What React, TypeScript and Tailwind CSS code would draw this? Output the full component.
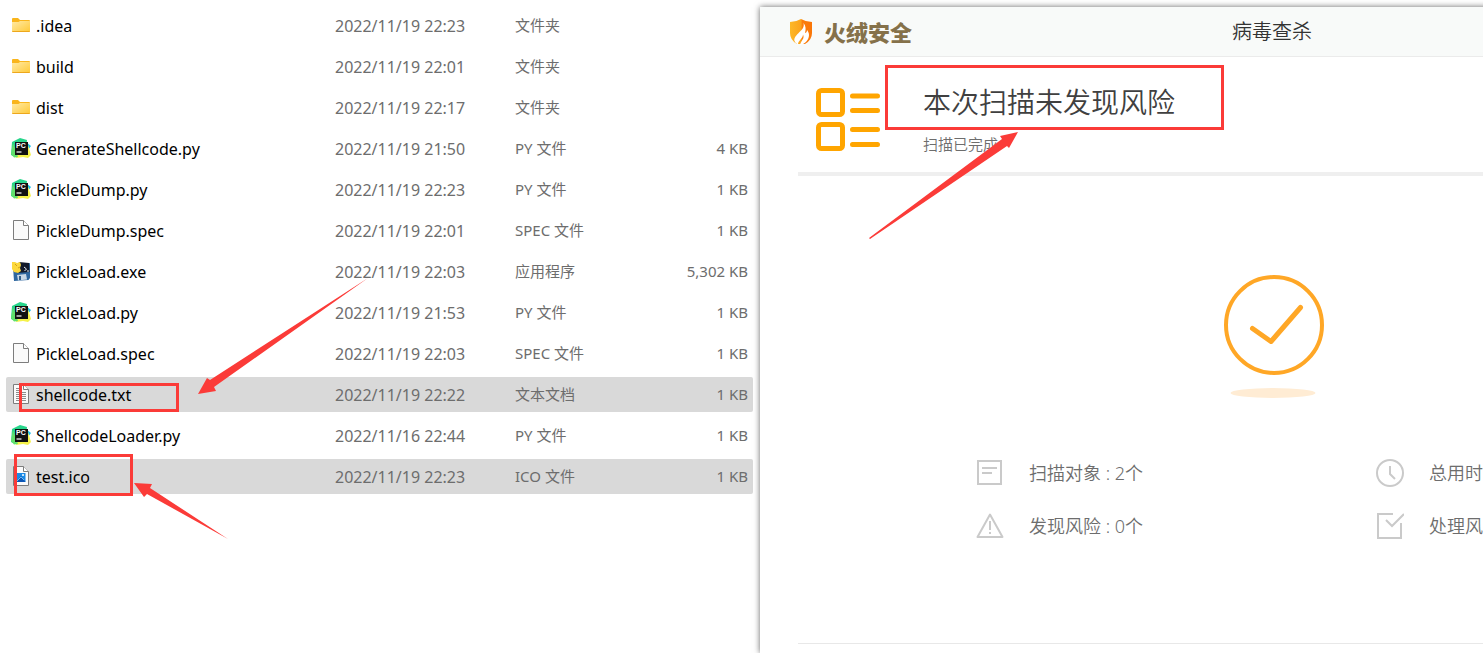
import type { ReactNode } from "react";
import clsx from "clsx";

type FileKind = "folder" | "python" | "blank" | "exe" | "text" | "image";

type FileEntry = {
  name: string;
  modified: string;
  type: string;
  size?: string;
  kind: FileKind;
  selected?: boolean;
};

const files: FileEntry[] = [
  { name: ".idea", modified: "2022/11/19 22:23", type: "文件夹", kind: "folder" },
  { name: "build", modified: "2022/11/19 22:01", type: "文件夹", kind: "folder" },
  { name: "dist", modified: "2022/11/19 22:17", type: "文件夹", kind: "folder" },
  { name: "GenerateShellcode.py", modified: "2022/11/19 21:50", type: "PY 文件", size: "4 KB", kind: "python" },
  { name: "PickleDump.py", modified: "2022/11/19 22:23", type: "PY 文件", size: "1 KB", kind: "python" },
  { name: "PickleDump.spec", modified: "2022/11/19 22:01", type: "SPEC 文件", size: "1 KB", kind: "blank" },
  { name: "PickleLoad.exe", modified: "2022/11/19 22:03", type: "应用程序", size: "5,302 KB", kind: "exe" },
  { name: "PickleLoad.py", modified: "2022/11/19 21:53", type: "PY 文件", size: "1 KB", kind: "python" },
  { name: "PickleLoad.spec", modified: "2022/11/19 22:03", type: "SPEC 文件", size: "1 KB", kind: "blank" },
  { name: "shellcode.txt", modified: "2022/11/19 22:22", type: "文本文档", size: "1 KB", kind: "text", selected: true },
  { name: "ShellcodeLoader.py", modified: "2022/11/16 22:44", type: "PY 文件", size: "1 KB", kind: "python" },
  { name: "test.ico", modified: "2022/11/19 22:23", type: "ICO 文件", size: "1 KB", kind: "image", selected: true },
];

function Page({ children }: { children?: ReactNode }) {
  return (
    <>
      <path d="M2.5 .5h10l5 5v14h-15z" fill="#fafafa" stroke="#7d7d7d" />
      <path d="M12.5 .5v5h5" fill="#fff" stroke="#7d7d7d" />
      {children}
    </>
  );
}

function FileIcon({ kind }: { kind: FileKind }) {
  return (
    <svg viewBox="0 0 20 20" className="mb-px h-5 w-5 shrink-0" aria-hidden="true">
      {kind === "folder" && (
        <>
          <defs>
            <linearGradient id="folder" x1="0" y1="0" x2="1" y2="1">
              <stop offset="0" stopColor="#ffeaa6" />
              <stop offset="1" stopColor="#ffc937" />
            </linearGradient>
          </defs>
          <path d="M1 4q0-1 1-1h5l2 2h9q1 0 1 1v3H1z" fill="#f9b51c" />
          <path d="M1 7h6.5l1.5-1h10v10q0 1-1 1H2q-1 0-1-1z" fill="url(#folder)" />
          <path d="M1.300 16.500h17.400" stroke="#eda71c" />
        </>
      )}
      {kind === "python" && (
        <>
          <path d="M1 4 9 0l7 2-2 16H2L0 17z" fill="#27d58b" />
          <path d="m15 4 5 4-3 4z" fill="#12bdea" />
          <path d="m14 6 3 1 3 10-3 3-5-1-7 1 1-6z" fill="#f5f24a" />
          <path d="m0 16 2-11 5 14-4 .5z" fill="#62e06c" />
          <path d="M4 4h13v13H4z" fill="#111" />
          <text x="5" y="10" fontSize="7" fontWeight="700" fontFamily="Liberation Sans, sans-serif" fill="#fff">
            PC
          </text>
          <path d="M5.500 14h5" stroke="#fff" strokeWidth="1.200" />
        </>
      )}
      {kind === "blank" && <Page />}
      {kind === "exe" && (
        <>
          <path d="m2 6 17-4v15l-1.500 2L3 20z" fill="#2f679f" />
          <path d="m8 1 10 1 .5 9-13 1z" fill="#121a2b" />
          <path d="m6 14 9-1 1 5.500-9 1z" fill="#c8d7e5" />
          <path d="M8 15h2v4H8z" fill="#315f8d" />
          <path d="m13 6 2.500 2-2 2M16 10h2" fill="none" stroke="#e9eef5" />
          <path d="M1 1h3l2 1 3-1 1 3-1 3 1 3-3 2-4-1-2-3z" fill="#fcd83c" />
          <path d="m4 3 2 2M7 7l2-1" stroke="#c79110" strokeWidth=".8" />
        </>
      )}
      {kind === "text" && (
        <Page>
          <path d="M5 4.500h6M5 6.500h6M5 8.500h10M5 10.500h10M5 12.500h10M5 14.500h10M5 16.500h10" stroke="#8d8d8d" />
        </Page>
      )}
      {kind === "image" && (
        <Page>
          <path d="M5 7h9.500v9H5z" fill="#1b8ae5" />
          <path d="m5 16 5-6 4.500 6z" fill="#0b55b5" />
          <path d="m5 16 5-5 3 3" fill="none" stroke="#8cd0ff" strokeWidth=".8" />
          <circle cx="12" cy="9" r="1" fill="#fff" />
        </Page>
      )}
    </svg>
  );
}

function FileList() {
  return (
    <section className="w-[760px] shrink-0 pt-[2px] pr-[7px] pl-[6px]">
      <table className="w-full table-fixed border-separate border-spacing-x-0 border-spacing-y-[6px] leading-5 text-[#6d6d6d]">
        <colgroup>
          <col />
          <col className="w-[180px]" />
          <col className="w-[130px]" />
          <col className="w-[108px]" />
        </colgroup>
        <tbody>
          {files.map((file) => (
            <tr key={file.name} className={clsx("h-[35px]", file.selected && "bg-[#d9d9d9]")}>
              <td className="rounded-l-xs pl-[5px]">
                <div className="flex items-center gap-[5px] text-base leading-5 text-black">
                  <FileIcon kind={file.kind} />
                  {file.name}
                </div>
              </td>
              <td className="text-base leading-5">{file.modified}</td>
              <td className="pb-[2px] text-[15px]">{file.type}</td>
              <td className="rounded-r-xs pr-[5px] pb-[2px] text-right text-[15px]">{file.size}</td>
            </tr>
          ))}
        </tbody>
      </table>
    </section>
  );
}

function ShieldLogo() {
  return (
    <svg viewBox="0 0 24 26" className="h-[26px] w-6" aria-hidden="true">
      <defs>
        <linearGradient id="shield" x1="0" y1="0" x2="1" y2="0">
          <stop offset="0" stopColor="#fdb827" />
          <stop offset=".5" stopColor="#fba31c" />
          <stop offset=".55" stopColor="#fb7d0c" />
          <stop offset="1" stopColor="#fa7608" />
        </linearGradient>
      </defs>
      <path d="M1 3q6 0 11-3 5 3 11 3v11q0 7-7 11H8q-7-4-7-11z" fill="url(#shield)" />
      <path
        d="M14.500 4c1 4-1 6-4 9s-6 6-5 9q1 3 3.500 3.500c0-4 5-6 5-10 2 4-2 6-3 10.500 5-1 9-5 9-10 0-2-1-4-2-5 0 2-1 3-2 3 1-4 1-7-1.500-10z"
        fill="#fff"
      />
    </svg>
  );
}

function ListIcon() {
  return (
    <svg viewBox="0 0 64 64" className="h-16 w-16" fill="none" stroke="#ffa500" strokeWidth="5" aria-hidden="true">
      <rect x="2.500" y="2.500" width="24" height="24" rx="3" />
      <rect x="2.500" y="36.500" width="24" height="24" rx="3" />
      <path d="M36.500 8h25M36.500 22.500h25M36.500 41.500h25M36.500 56.500h25" strokeLinecap="round" />
    </svg>
  );
}

function Stat({ icon, children }: { icon: ReactNode; children: ReactNode }) {
  return (
    <li className="flex h-[53px] items-center gap-[25px]">
      <svg viewBox="0 0 28 28" className="h-7 w-7 shrink-0" fill="none" stroke="#cacaca" strokeWidth="2" aria-hidden="true">
        {icon}
      </svg>
      {children}
    </li>
  );
}

function ScanWindow() {
  return (
    <main className="relative mt-[7px] min-w-[1024px] flex-1 bg-white shadow-[0_0_6px_rgba(0,0,0,0.6)]">
      <header className="grid h-[50px] grid-cols-[1fr_auto_1fr] items-center border-b border-[#ebebeb] bg-[#f8faf9] px-[29px]">
        <div className="flex items-center gap-[11px] text-[22px] leading-6 font-black text-[#85714a]">
          <ShieldLogo />
          火绒安全
        </div>
        <h1 className="text-xl font-[350] text-[#333]">病毒查杀</h1>
      </header>

      <div className="px-[38px]">
        <section className="flex h-[119px] items-center gap-[43px] border-b-4 border-[#efefef] pt-[10px] pl-[18px]">
          <ListIcon />
          <div className="flex flex-col gap-3 pb-1">
            <h2 className="text-[28px] leading-10 font-[350] text-[#404040]">本次扫描未发现风险</h2>
            <p className="text-[15px] leading-5 font-[350] text-[#6d6d6d]">扫描已完成</p>
          </div>
        </section>

        <section className="flex h-[468px] flex-col items-center border-b border-[#e8e8e8] pt-[99px]">
          <svg viewBox="0 0 100 123" className="ml-1 h-[123px] w-[100px]" fill="none" aria-hidden="true">
            <circle cx="50" cy="50" r="48" stroke="#ffa726" strokeWidth="4" />
            <path d="m28.500 53.500 18.500 13 29.500-34" stroke="#ffa726" strokeWidth="5" strokeLinecap="round" strokeLinejoin="round" />
            <ellipse cx="49" cy="118" rx="42.500" ry="5" fill="#ffecd4" />
          </svg>
          <ul className="mt-12 grid w-full grid-cols-[400px_1fr] pl-[178px] text-lg font-[350] text-[#6d6d6d]">
            <Stat
              icon={
                <>
                  <path d="M2 2h23v23H2z" />
                  <path d="M6 9h15M6 14h10" />
                </>
              }
            >
              扫描对象 : 2个
            </Stat>
            <Stat
              icon={
                <>
                  <circle cx="14" cy="14" r="13" />
                  <path d="M14 7v8l5 5" />
                </>
              }
            >
              总用时
            </Stat>
            <Stat
              icon={
                <>
                  <path d="M14 2.500 26.500 25h-25z" strokeLinejoin="round" />
                  <path d="M14 9v9M14 20v2" />
                </>
              }
            >
              发现风险 : 0个
            </Stat>
            <Stat
              icon={
                <>
                  <path d="M17 2H2v24h23V11" />
                  <path d="m10 8 6 6L28 2" />
                </>
              }
            >
              处理风
            </Stat>
          </ul>
        </section>
      </div>
    </main>
  );
}

// Red callouts drawn over both windows
function Callouts() {
  return (
    <div className="pointer-events-none absolute inset-0">
      <div className="absolute top-[383px] left-[19px] h-[29px] w-[160px] border-3 border-[#fb3b38]" />
      <div className="absolute top-[454px] left-[14px] h-[42px] w-[119px] border-3 border-[#fb3b38]" />
      <div className="absolute top-[65px] left-[885px] h-[65px] w-[339px] border-3 border-[#fb3b38]" />
      <svg className="absolute inset-0 h-full w-full" fill="#fb3b38" aria-hidden="true">
        <path d="m198 394 9-16 3 2 158-102-154 109 2 4z" />
        <path d="m134 483 18 1-2 4 78 51-81-45-3 3z" />
        <path d="m1018 132-18 4 2 3-133 99 1 1 137-93 2 2z" />
      </svg>
    </div>
  );
}

export default function App() {
  return (
    <div className="relative flex min-h-screen overflow-hidden bg-white font-['Noto_Sans','Noto_Sans_CJK_SC',sans-serif]">
      <FileList />
      <ScanWindow />
      <Callouts />
    </div>
  );
}
